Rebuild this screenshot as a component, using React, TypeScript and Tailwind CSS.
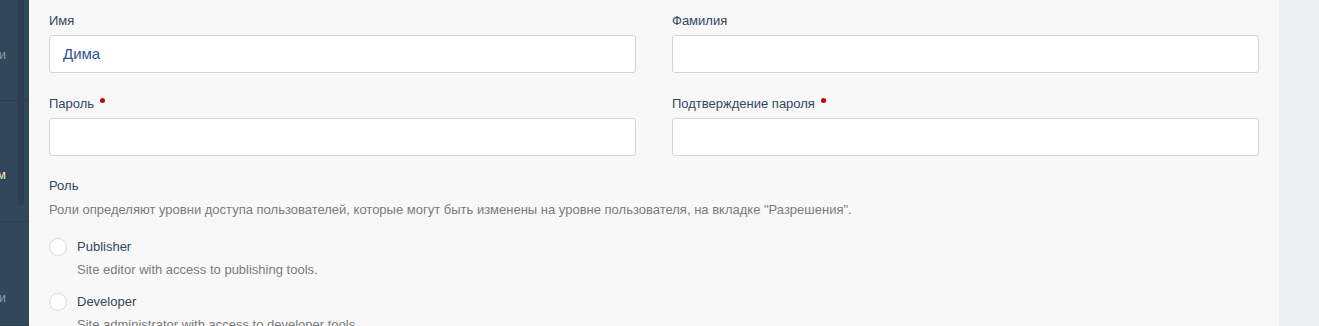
import { ReactNode } from 'react';

function Field({ label, required, value }: { label: string; required?: boolean; value?: string }) {
  return (
    <div className="flex flex-col">
      <label className="flex h-[18px] items-start text-[13px] leading-[18px] text-[#33475b]">
        {label}
        {required && <span className="ml-[6px] mt-[3px] h-[5px] w-[5px] rounded-full bg-[#c80000]"></span>}
      </label>
      <div className="mt-[5px] flex h-[38px] items-center rounded-[3px] border border-[#cfd5d8] bg-white px-[13px] text-[15px] text-[#2d5394]">
        {value}
      </div>
    </div>
  );
}

function Role({ name, desc }: { name: string; desc: string }) {
  return (
    <div className="flex">
      <span className="h-[18px] w-[18px] shrink-0 rounded-full border border-[#d9dddf] bg-white"></span>
      <div className="ml-[10px] flex flex-col">
        <span className="text-[13px] leading-[18px] text-[#33475b]">{name}</span>
        <span className="mt-[5px] text-[13px] leading-[18px] text-[#7b7b7b]">{desc}</span>
      </div>
    </div>
  );
}

function NavItem({ children, active, h }: { children: ReactNode; active?: boolean; h: string }) {
  return (
    <div className={`flex items-start justify-end overflow-hidden border-b border-[#2b3d4f] pr-[23px] ${h}`}>
      <span className={`whitespace-nowrap text-[13px] leading-[18px] ${active ? 'text-[#f5e6c8]' : 'text-[#8a9bae]'}`}>{children}</span>
    </div>
  );
}

export default function App() {
  return (
    <div className="flex h-[326px] w-[1319px] overflow-hidden bg-[#eaeef0] font-['Liberation_Sans',Arial,sans-serif]">
      <aside className="relative w-[29px] shrink-0 bg-[#33475b]">
        <NavItem h="h-[101px] pt-[46px]">Пользователи</NavItem>
        <NavItem h="h-[121px] pt-[65px]" active>Управление доступом</NavItem>
        <NavItem h="h-[104px] pt-[67px]">Интеграции</NavItem>
        <div className="absolute left-[18px] top-0 h-[206px] w-[6px] rounded-b-[3px] bg-[#2c3e50]"></div>
      </aside>
      <main className="w-[1250px] shrink-0 bg-[#f8f8f8] px-[20px] pt-[12px]">
        <div className="grid grid-cols-2 gap-x-[36px] gap-y-[22px]">
          <Field label="Имя" value="Дима" />
          <Field label="Фамилия" />
          <Field label="Пароль" required />
          <Field label="Подтверждение пароля" required />
        </div>
        <div className="mt-[21px] text-[13px] leading-[18px] text-[#33475b]">Роль</div>
        <div className="mt-[6px] text-[13px] leading-[18px] text-[#7b7b7b]">
          Роли определяют уровни доступа пользователей, которые могут быть изменены на уровне пользователя, на вкладке "Разрешения".
        </div>
        <div className="mt-[19px] flex flex-col gap-[14px]">
          <Role name="Publisher" desc="Site editor with access to publishing tools." />
          <Role name="Developer" desc="Site administrator with access to developer tools." />
        </div>
      </main>
    </div>
  );
}
